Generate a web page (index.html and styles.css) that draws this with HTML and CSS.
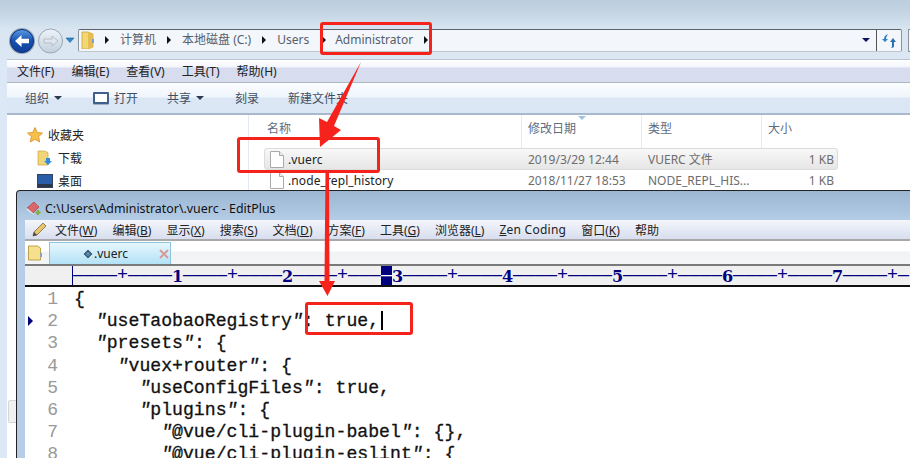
FILE: index.html
```html
<!DOCTYPE html>
<html lang="zh">
<head>
<meta charset="utf-8">
<title>EditPlus .vuerc</title>
<link rel="stylesheet" href="styles.css">
</head>
<body>
<div class="desktop">
  <section class="explorer">
    <div class="nav-area">
      <svg class="nav-buttons" width="72" height="32" viewBox="0 0 72 32">
        <defs>
          <linearGradient id="bk" x1="0" y1="0" x2="0" y2="1"><stop offset="0" stop-color="#5b9be0"/><stop offset=".5" stop-color="#1550b0"/><stop offset="1" stop-color="#0f3f9a"/></linearGradient>
          <linearGradient id="fw" x1="0" y1="0" x2="0" y2="1"><stop offset="0" stop-color="#eef3f8"/><stop offset="1" stop-color="#c3d0de"/></linearGradient>
        </defs>
        <circle cx="41.500" cy="16" r="12" fill="url(#fw)" stroke="#9aa7b5"/>
        <path d="M49 16l-6-5v3h-8v4h8v3z" fill="#dfe6ee" stroke="#a9b5c2" stroke-width=".8"/>
        <circle cx="13" cy="16" r="13" fill="#8fa3b8"/>
        <circle cx="13" cy="16" r="11.500" fill="url(#bk)" stroke="#0c2f78"/>
        <path d="M6 16l6.500-6v3.700h7.500v4.600h-7.500v3.700z" fill="#fff"/>
        <path d="M57 13h8l-4 4.500z" fill="#2f86c9" stroke="#1c5f96" stroke-width=".6"/>
      </svg>
      <div class="address">
        <svg class="crumb-folder" width="14" height="18" viewBox="0 0 14 18">
          <path d="M1 1h6l5 2v13l-5 2H1z" fill="#f3d774" stroke="#c9a53e" stroke-width=".8"/>
          <path d="M7 1l5 2v13l-5 2z" fill="#e4bc52"/>
          <rect x="11" y="8" width="2" height="4" fill="#7ea3c9"/>
        </svg>
        <span class="sep"></span><span>计算机</span>
        <span class="sep"></span><span>本地磁盘 (C:)</span>
        <span class="sep"></span><span>Users</span>
        <span class="sep sep-boxed"></span><span>Administrator</span>
        <span class="sep"></span>
        <span class="spring"></span>
        <span class="drop"></span>
        <span class="refresh">
          <svg width="15" height="15" viewBox="0 0 15 15"><path d="M6 1C3 2 2 4 2 6L0 6l3 3 3-3H4c0-2 1-3 2-5z" fill="#2f7fc4"/><path d="M11 5l3 4h-2v4c0 1-1 2-3 2 1-1 1-2 1-2V9H8z" fill="#2a6fae"/></svg>
        </span>
      </div>
      <div class="search"></div>
    </div>
    <div class="inner">
      <nav class="menu"><span>文件(F)</span><span>编辑(E)</span><span>查看(V)</span><span>工具(T)</span><span>帮助(H)</span></nav>
      <div class="toolbar">
        <span class="tool w-org">组织<i class="caret"></i></span>
        <span class="tool w-open"><i class="window-ico"></i>打开</span>
        <span class="tool w-share">共享<i class="caret"></i></span>
        <span class="tool w-burn">刻录</span>
        <span class="tool">新建文件夹</span>
      </div>
      <div class="content">
        <aside class="tree">
          <div class="tree-head">
            <svg width="16" height="16" viewBox="0 0 16 16"><path d="M8 .500l2.300 5 5.200.600-3.900 3.500 1.100 5.400L8 12.300 3.300 15l1.100-5.400L.500 6.100l5.200-.600z" fill="#f7c04a" stroke="#d98c1f" stroke-width=".8"/></svg>
            <span>收藏夹</span>
          </div>
          <div class="tree-item">
            <svg width="16" height="16" viewBox="0 0 16 16"><path d="M1 1h6l4 1.500V15H1z" fill="#f1d678" stroke="#c7a544" stroke-width=".7"/><path d="M9 8h4v3h2l-4 4-4-4h2z" fill="#2f8ae0"/></svg>
            <span>下载</span>
          </div>
          <div class="tree-item">
            <svg width="16" height="14" viewBox="0 0 16 14"><rect x=".500" y=".500" width="15" height="13" fill="#2a5ea8" stroke="#33415a"/><rect x="1" y="10" width="14" height="3" fill="#2b3647"/></svg>
            <span>桌面</span>
          </div>
        </aside>
        <div class="files">
          <div class="file-head">
            <span class="c-name">名称</span>
            <span class="c-date">修改日期<i class="sort"></i></span>
            <span class="c-type">类型</span>
            <span class="c-size">大小</span>
          </div>
          <div class="file-row selected">
            <span class="c-name"><svg class="doc" width="14" height="17" viewBox="0 0 14 17"><path d="M.500.500h9l4 4v12H.500z" fill="#fff" stroke="#aaa"/><path d="M9.500.500v4h4" fill="#eee" stroke="#aaa"/></svg>.vuerc</span>
            <span class="c-date">2019/3/29 12:44</span>
            <span class="c-type">VUERC 文件</span>
            <span class="c-size">1 KB</span>
          </div>
          <div class="file-row second">
            <span class="c-name"><svg class="doc" width="14" height="17" viewBox="0 0 14 17"><path d="M.500.500h9l4 4v12H.500z" fill="#fff" stroke="#aaa"/><path d="M9.500.500v4h4" fill="#eee" stroke="#aaa"/></svg>.node_repl_history</span>
            <span class="c-date">2018/11/27 18:53</span>
            <span class="c-type">NODE_REPL_HIS...</span>
            <span class="c-size">1 KB</span>
          </div>
        </div>
      </div>
      <div class="thumb"></div>
    </div>
  </section>

  <section class="editplus">
    <header class="ep-title">
      <svg width="17" height="17" viewBox="0 0 17 17"><path d="M1 8l7-6 5 5-6 6z" fill="#d9666a" stroke="#a83c40" stroke-width=".7"/><path d="M1 8l6 5 1 2-7-5z" fill="#e8e8e8"/><path d="M12 10v5M9.500 12.500h5" stroke="#7fae3c" stroke-width="2"/></svg>
      <span>C:\Users\Administrator\.vuerc - EditPlus</span>
    </header>
    <div class="ep-body">
      <nav class="ep-menu">
        <svg class="pencil" width="16" height="16" viewBox="0 0 16 16"><path d="M2 14l1-4L12 1l3 3-9 9z" fill="#e8c46a" stroke="#7a6a44" stroke-width=".8"/><path d="M2 14l1-4 3 3z" fill="#444"/></svg>
        <span>文件(<u>W</u>)</span><span>编辑(<u>B</u>)</span><span>显示(<u>X</u>)</span><span>搜索(<u>S</u>)</span><span>文档(<u>D</u>)</span><span>方案(<u>F</u>)</span><span>工具(<u>G</u>)</span><span>浏览器(<u>L</u>)</span><span class="zen"><u>Z</u>en Coding</span><span>窗口(<u>K</u>)</span><span>帮助</span>
      </nav>
      <div class="tabs">
        <svg class="tab-folder" width="15" height="16" viewBox="0 0 15 16"><path d="M.500 1h9l3 2v12H.500z" fill="#f6e08e" stroke="#bda24e"/><rect x="12" y="8" width="2" height="4" fill="#8aa4b8"/></svg>
        <div class="tab">
          <span class="tab-label"><i class="diamond"></i>.vuerc</span>
          <svg class="tab-close" width="10" height="10" viewBox="0 0 10 10"><path d="M1 1l8 8M9 1L1 9" stroke="#d99a9a" stroke-width="2"/></svg>
        </div>
      </div>
      <div class="ruler"><span class="bar"></span>————+————<b>1</b>————+————<b>2</b>————+———<span class="cur">—</span><b>3</b>————+————<b>4</b>————+————<b>5</b>————+————<b>6</b>————+————<b>7</b>————+—</div>
      <div class="editor">
        <div class="line"><i class="mark"></i><span class="num">1</span><code>{</code></div>
        <div class="line"><i class="mark on"></i><span class="num">2</span><code>  <em>"</em>useTaobaoRegistry<em>"</em>: true,<i class="cursor"></i></code></div>
        <div class="line"><i class="mark"></i><span class="num">3</span><code>  <em>"</em>presets<em>"</em>: {</code></div>
        <div class="line"><i class="mark"></i><span class="num">4</span><code>    <em>"</em>vuex+router<em>"</em>: {</code></div>
        <div class="line"><i class="mark"></i><span class="num">5</span><code>      <em>"</em>useConfigFiles<em>"</em>: true,</code></div>
        <div class="line"><i class="mark"></i><span class="num">6</span><code>      <em>"</em>plugins<em>"</em>: {</code></div>
        <div class="line"><i class="mark"></i><span class="num">7</span><code>        <em>"</em>@vue/cli-plugin-babel<em>"</em>: {},</code></div>
        <div class="line"><i class="mark"></i><span class="num">8</span><code>        <em>"</em>@vue/cli-plugin-eslint<em>"</em>: {</code></div>
      </div>
    </div>
  </section>

  <div class="box box-a"></div>
  <div class="box box-b"></div>
  <div class="box box-c"></div>
  <svg class="arrows" width="910" height="458" viewBox="0 0 910 458">
    <path d="M361 62L334 126 341 130 320 147 319 118 327 122z" fill="#f5231b"/>
    <path d="M325.500 172h3.500l.5 109h5.500l-7.500 15-8.500-15h5.500z" fill="#f5231b"/>
  </svg>
</div>
</body>
</html>
```
FILE: styles.css
```css
* { box-sizing: border-box; }
html, body { margin: 0; padding: 0; }
body { width: 910px; height: 458px; overflow: hidden; background: #fff; }
i { font-style: normal; display: inline-block; }

.desktop {
  position: relative;
  width: 910px;
  height: 458px;
  overflow: hidden;
  font-family: "Noto Sans", "Noto Sans CJK SC", sans-serif;
  font-size: 12px;
  color: #3c3c3c;
}

/* Explorer */
.explorer {
  height: 458px;
  display: flex;
  flex-direction: column;
  background: #dce8f5;
}
.nav-area {
  height: 59px;
  flex: none;
  display: flex;
  align-items: flex-start;
  padding: 25px 0 0 9px;
  background: linear-gradient(#bccddd 0, #c4d4e3 12px, #d9e6f2 30px, #dbe8f3 59px);
}
.nav-buttons { flex: none; }
.address {
  flex: none;
  width: 824px;
  height: 23px;
  margin: 4px 0 0 -3px;
  display: flex;
  align-items: center;
  gap: 11px;
  padding: 0 0 1px 2px;
  background: #f3f7fb;
  border: 1px solid #8c939b;
  border-top-color: #5b6269;
  border-bottom-color: #c2c7cc;
  border-radius: 2px;
  color: #55606b;
  line-height: 20px;
}
.crumb-folder { margin: 0 -1px 0 0; }
.sep { width: 0; height: 0; border-left: 4px solid #111; border-top: 4px solid transparent; border-bottom: 4px solid transparent; }
.sep-boxed { margin: 0 -2px 0 2px; }
.spring { flex: 1; }
.drop { width: 0; height: 0; margin-right: -5px; border-top: 4px solid #101060; border-left: 4px solid transparent; border-right: 4px solid transparent; }
.refresh { width: 25px; height: 21px; display: flex; align-items: center; justify-content: center; border-left: 1px solid #555; }
.search { flex: none; width: 10px; height: 23px; margin: 4px 0 0 6px; background: #f3f7fb; border: 1px solid #8c939b; }

.inner {
  position: relative;
  flex: 1;
  margin-left: 7px;
  display: flex;
  flex-direction: column;
  background: #fff;
  min-height: 0;
}
.menu {
  height: 24px;
  flex: none;
  display: flex;
  align-items: center;
  gap: 17px;
  padding-left: 10px;
  background: linear-gradient(#fff 0, #f3f6fc 7px, #d7dcef 8px, #d8ddee 22px);
  border-top: 1px solid #b9c6d2;
  border-bottom: 1px solid #aeb7c4;
  color: #222;
}
.toolbar {
  height: 32px;
  flex: none;
  display: flex;
  align-items: center;
  padding-left: 18px;
  color: #3f4f63;
  background: linear-gradient(#fbfdff 0, #eff5fc 14px, #dce7f5 15px, #dbe6f4 30px);
  border-bottom: 2px solid #a9b9cd;
}
.tool { display: inline-flex; align-items: center; }
.w-org { width: 68px; }
.w-open { width: 74px; }
.w-share { width: 68px; }
.w-burn { width: 53px; }
.caret { width: 0; height: 0; margin-left: 5px; border-top: 4px solid #2b3a4d; border-left: 4px solid transparent; border-right: 4px solid transparent; }
.window-ico { width: 16px; height: 12px; margin-right: 5px; background: #fff; border: 2px solid #3f5f8c; border-radius: 1px; box-shadow: 0 1px 0 #9fb0c5; }
.content { flex: none; height: 75px; display: flex; overflow: hidden; }
.tree { width: 242px; flex: none; padding: 9px 0 0 20px; border-right: 1px solid #e3eaf3; color: #222; }
.tree-head { display: flex; align-items: center; gap: 5px; height: 22px; }
.tree-item { display: flex; align-items: center; gap: 5px; height: 23px; margin-left: 10px; }
.files { flex: 1; min-width: 0; }
.file-head { height: 33px; display: flex; color: #5d6c80; }
.file-head > span { display: flex; align-items: center; position: relative; padding-bottom: 7px; }
.file-head .c-date, .file-head .c-type, .file-head .c-size { border-left: 1px solid #e3ecf6; }
.c-name { width: 272px; padding-left: 18px; flex: none; }
.c-date { width: 120px; padding-left: 6px; flex: none; }
.c-type { width: 120px; padding-left: 6px; flex: none; }
.c-size { width: 80px; padding-left: 6px; flex: none; }
.sort { position: absolute; left: 56px; top: 1px; width: 0; height: 0; border-top: 4px solid #9cc3e4; border-left: 4px solid transparent; border-right: 4px solid transparent; }
.file-row { display: flex; align-items: center; height: 20px; color: #6d6d6d; }
.file-row .c-name { color: #222; display: flex; align-items: center; padding-left: 21px; letter-spacing: .1px; }
.file-row .c-size { text-align: right; padding-right: 7px; }
.file-row .c-date, .file-row .c-type { padding-left: 7px; }
.selected {
  height: 22px;
  width: 574px;
  margin-left: 15px;
  border: 1px solid #dcdcdc;
  border-radius: 3px;
  background: linear-gradient(#f8f8f8, #e6e6e6);
}
.selected .c-name { width: 256px; padding-left: 5px; }
.selected .c-size { width: 76px; padding-right: 3px; }
.doc { margin-right: 4px; flex: none; }
.thumb { position: absolute; left: 1px; top: 341px; width: 10px; height: 23px; background: #f1f1f1; border: 1px solid #d6d6d6; border-radius: 2px; }

/* EditPlus window */
.editplus {
  position: absolute;
  left: 16px;
  top: 190px;
  width: 900px;
  height: 268px;
  padding: 0 0 0 1px;
  border: 1px solid #222;
  border-bottom: 0;
  border-radius: 4px 0 0 0;
  background: linear-gradient(#9cb6d2, #b5cde6 30px, #b5cde6);
  display: flex;
  flex-direction: column;
}
.ep-title {
  height: 29px;
  flex: none;
  display: flex;
  align-items: center;
  gap: 2px;
  padding: 5px 0 0 8px;
  font-size: 12.400px;
  color: #111;
}
.ep-body { flex: 1; margin-left: 7px; display: flex; flex-direction: column; min-height: 0; background: #fff; }
.ep-menu {
  height: 21px;
  flex: none;
  display: flex;
  align-items: center;
  gap: 15px;
  padding-left: 6px;
  color: #222;
  background: linear-gradient(#f4f6fb, #d8deef);
  border-bottom: 2px solid #a9a9a9;
}
.pencil { margin-right: -7px; }
.zen { letter-spacing: .25px; }
.tabs {
  height: 25px;
  flex: none;
  display: flex;
  padding-left: 3px;
  background: linear-gradient(#fff 0, #fff 10px, #f1f2f4 11px, #f4f5f7 23px);
  border-bottom: 2px solid #7a7a7a;
}
.tab-folder { margin: 4px 6px 0 0; }
.tab {
  width: 122px;
  height: 22px;
  margin-top: 1px;
  display: flex;
  align-items: center;
  justify-content: space-between;
  padding: 0 1px 0 35px;
  background: linear-gradient(#e6f6fd, #b4e2f6);
  border: 1px solid #8cc3de;
  border-bottom: 0;
  color: #222;
}
.tab-label { display: flex; align-items: center; gap: 3px; }
.diamond { width: 6px; height: 6px; transform: rotate(45deg); background: #5d86a8; border: 1px solid #2c5373; }
.ruler {
  height: 21px;
  flex: none;
  padding-left: 47px;
  background: #f0f0f0;
  border-bottom: 2px solid #111;
  font-family: "Liberation Mono", monospace;
  font-size: 18.330px;
  line-height: 19px;
  color: #00007f;
  white-space: pre;
  overflow: hidden;
}
.ruler b { font-family: "DejaVu Serif", serif; font-size: 16px; display: inline-block; width: 11px; text-align: center; vertical-align: top; line-height: 22px; }
.bar { display: inline-block; width: 0; height: 19px; border-left: 1px solid #00007f; vertical-align: top; }
.cur { display: inline-block; width: 11px; height: 19px; background: #00007f; color: #fff; vertical-align: top; }
.editor { flex: 1; min-height: 0; overflow: hidden; background: #fff; padding-top: 1px; }
.line { height: 22.200px; display: flex; align-items: center; }
.mark { flex: none; }
.mark.on { height: 0; width: 0; margin-right: 3px; border-left: 5px solid #00007f; border-top: 5px solid transparent; border-bottom: 5px solid transparent; margin-left: 3px; }
.line .mark:not(.on) { width: 11px; }
.num {
  width: 22px;
  flex: none;
  text-align: right;
  color: #999;
  font-family: "Liberation Mono", monospace;
  font-size: 18px;
}
code {
  margin-left: 16px;
  font-family: "Liberation Mono", monospace;
  font-size: 18.170px;
  color: #111;
  white-space: pre;
  -webkit-text-stroke: .3px #111;
}
code em { font-style: italic; }
.cursor { width: 2px; height: 19px; background: #000; vertical-align: -4px; margin-left: 2px; }

/* Annotations */
.box { position: absolute; border: 3px solid #f5231b; border-radius: 3px; }
.box-a { left: 320px; top: 22px; width: 112px; height: 33px; }
.box-b { left: 237px; top: 137px; width: 143px; height: 36px; }
.box-c { left: 305px; top: 302px; width: 108px; height: 33px; }
.arrows { position: absolute; left: 0; top: 0; pointer-events: none; }
```
